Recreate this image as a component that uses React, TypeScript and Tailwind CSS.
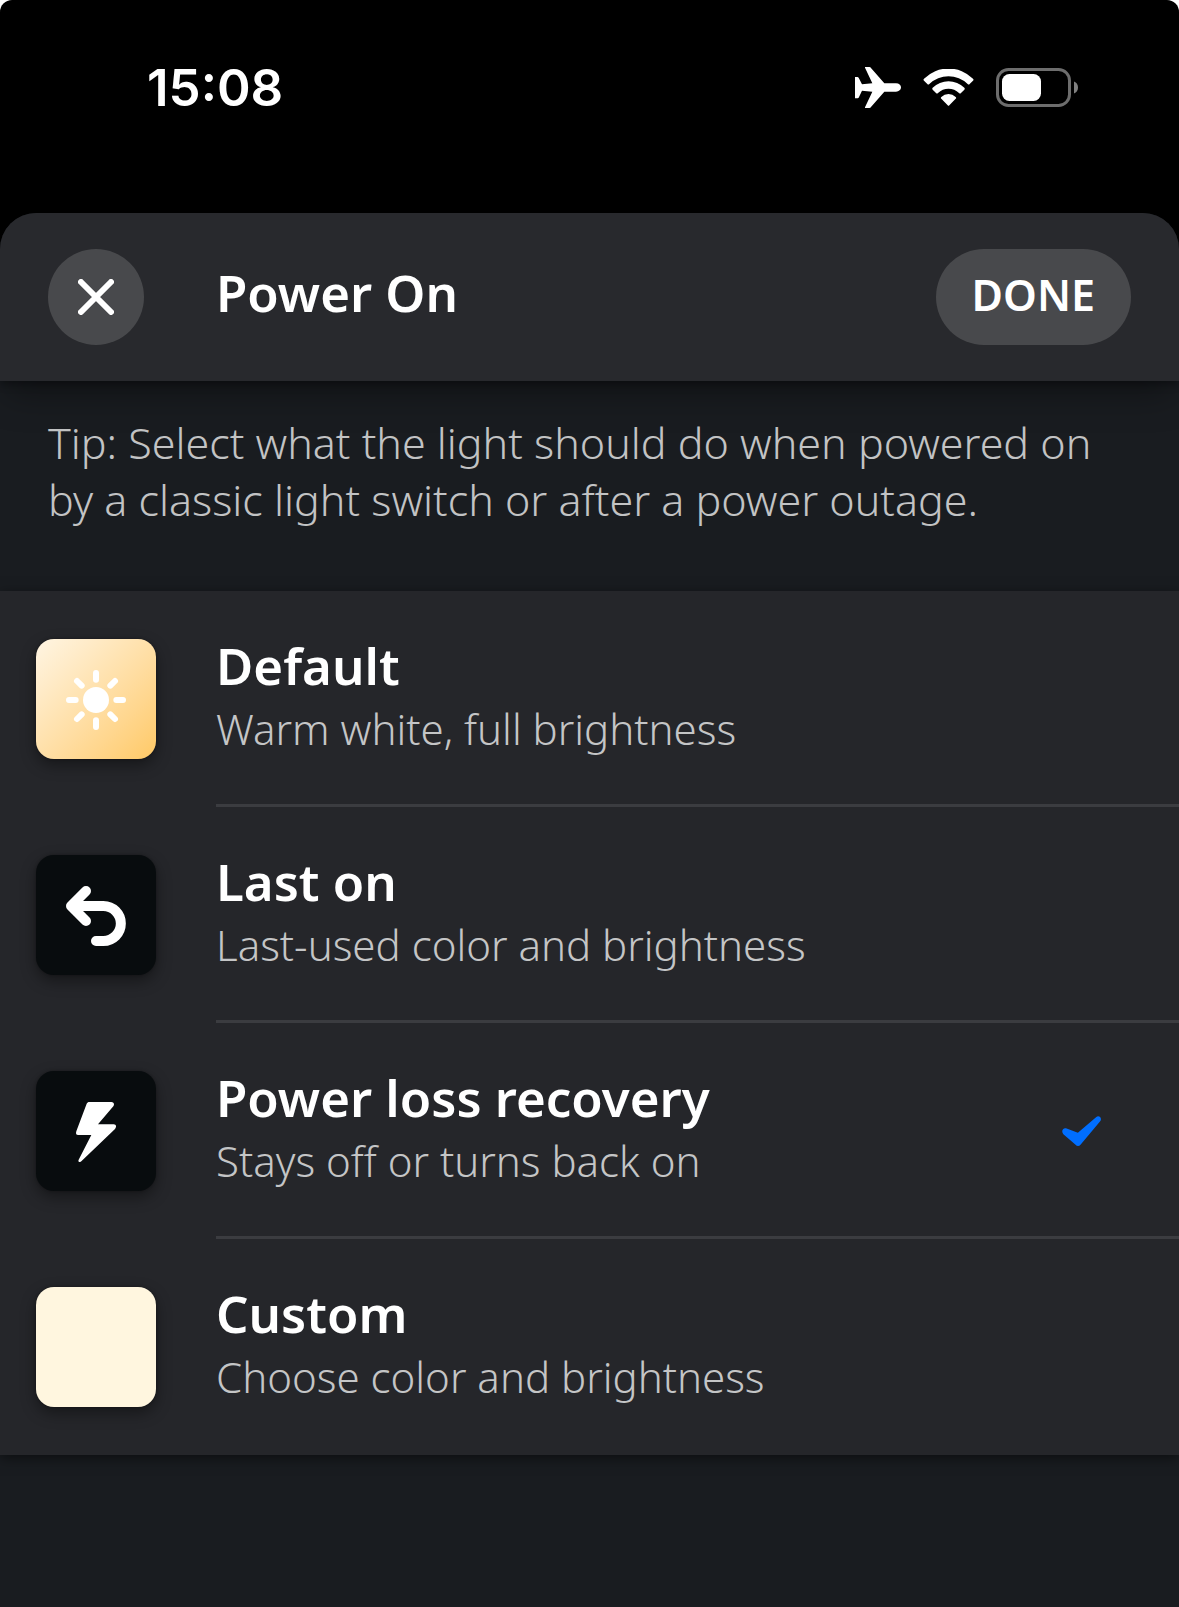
import React, { ReactNode, useState } from 'react';

interface PowerOption {
    id: string;
    title: string;
    description: string;
    tile: string;
    icon?: ReactNode;
}

const PlaneIcon = () => (
    <svg className="w-[46px] h-[41px]" viewBox="0 0 138 123" fill="currentColor" aria-hidden="true">
        <path d="M0 30h8l3 2 10 20 31-3-22-47v-2h13l3 1 42 48h35c9 0 15 5 15 12s-6 13-15 13H88l-42 48-3 1H30v-2l22-47-31-3-10 21-3 2H0z" />
    </svg>
);

const WifiIcon = () => (
    <svg className="w-[51px] h-[37px]" viewBox="0 0 151 111" fill="currentColor" aria-hidden="true">
        <path d="M2 29a104 104 0 0 1 147 0q3 3 0 6l-10 10q-3 3-6 0a83 83 0 0 0-115 0q-3 3-6 0L2 35q-3-3 0-6z" />
        <path d="M28 56a68 68 0 0 1 95 0q3 3 0 6l-10 10q-3 3-6 0a45 45 0 0 0-63 0q-3 3-6 0L28 62q-3-3 0-6z" />
        <path d="M54 84a31 31 0 0 1 43 0q3 3 0 5L78 109q-2 3-5 0L54 89q-3-2 0-5z" />
    </svg>
);

const BatteryIcon = () => (
    <svg className="w-[82px] h-[39px]" viewBox="0 0 82 39" aria-hidden="true">
        <rect x="1.5" y="1.5" width="72" height="36" rx="11" fill="none" stroke="#6d6d6d" strokeWidth="3" />
        <rect x="6" y="6" width="39" height="27" rx="7.5" fill="#fff" />
        <path d="M78 13.5c2.600.8 4 3.200 4 6s-1.400 5.200-4 6z" fill="#808080" />
    </svg>
);

const CloseIcon = () => (
    <svg className="w-9 h-9" viewBox="0 0 36 36" fill="none" stroke="currentColor" strokeWidth="6" strokeLinecap="round" aria-hidden="true">
        <path d="M3 3l30 30M33 3L3 33" />
    </svg>
);

const SunIcon = () => (
    <svg className="w-[60px] h-[60px]" viewBox="0 0 180 180" stroke="#fff" strokeWidth="18" strokeLinecap="round" aria-hidden="true">
        <circle cx="90" cy="90" r="39" fill="#fff" stroke="none" />
        <path d="M90 9v20M90 151v20M9 90h20M151 90h20M33 33l14 14M133 133l14 14M147 33l-14 14M47 133l-14 14" />
    </svg>
);

const UndoIcon = () => (
    <svg className="w-[60px] h-[60px]" viewBox="0 0 180 180" fill="none" stroke="#fff" strokeWidth="30" strokeLinecap="round" strokeLinejoin="round" aria-hidden="true">
        <path d="M60 15L15 60l45 45M15 60h97a52.500 52.500 0 0 1 0 105H90" />
    </svg>
);

const BoltIcon = () => (
    <svg className="w-10 h-[60px]" viewBox="0 0 120 180" fill="#fff" aria-hidden="true">
        <path d="M40 0h66c8 0 10 7 6 13L66 67h47c8 0 9 8 4 14L16 178c-4 4-11 2-8-5L46 99H6c-6 0-7-5-5-11L32 5c2-3 4-5 8-5z" />
    </svg>
);

const CheckIcon = () => (
    <svg className="w-[39px] h-[30px]" viewBox="0 0 118 91" fill="#006eff" aria-hidden="true">
        <path d="M14 38l34 13 56-48c6-5 14 0 14 7 0 3-1 5-3 7L56 87c-4 5-11 5-15 0L4 55C-4 46 3 34 14 38z" />
    </svg>
);

const options: PowerOption[] = [
    {
        id: 'default',
        title: 'Default',
        description: 'Warm white, full brightness',
        tile: 'bg-linear-to-br from-[#fff5e3] to-[#ffc965]',
        icon: <SunIcon />,
    },
    {
        id: 'last-on',
        title: 'Last on',
        description: 'Last-used color and brightness',
        tile: 'bg-[#080c0e]',
        icon: <UndoIcon />,
    },
    {
        id: 'recovery',
        title: 'Power loss recovery',
        description: 'Stays off or turns back on',
        tile: 'bg-[#080c0e]',
        icon: <BoltIcon />,
    },
    {
        id: 'custom',
        title: 'Custom',
        description: 'Choose color and brightness',
        tile: 'bg-[#fff6df]',
    },
];

const StatusBar = () => (
    <div className="flex items-center justify-between pt-[57px] pb-[95px] pl-[147px] pr-[101px] text-white">
        <span className="font-['Inter',sans-serif] text-[51px] leading-[61px] font-semibold">15:08</span>
        <div className="flex items-center gap-[22px]">
            <PlaneIcon />
            <WifiIcon />
            <BatteryIcon />
        </div>
    </div>
);

interface OptionRowProps {
    option: PowerOption;
    checked: boolean;
    onSelect: () => void;
}

const OptionRow: React.FC<OptionRowProps> = ({ option, checked, onSelect }) => (
    <label className="group flex pl-9 cursor-pointer">
        <input type="radio" name="power-on" className="sr-only" checked={checked} onChange={onSelect} />
        <span
            className={`my-12 flex w-[120px] h-[120px] shrink-0 items-center justify-center rounded-[18px] pt-0.5 shadow-[0_6px_15px_rgba(0,0,0,0.4),0_0_3px_rgba(0,0,0,0.3)] ${option.tile}`}
        >
            {option.icon}
        </span>
        <span className="ml-[60px] flex grow items-center justify-between border-b-[3px] border-[#3b3c40] pt-[3px] pr-[78px] group-last:border-transparent">
            <span>
                <span className="block text-[51px] leading-[60px] font-semibold text-white">{option.title}</span>
                <span className="block text-[42px] leading-[68px] font-light text-[#c4c5c6]">{option.description}</span>
            </span>
            {checked && <CheckIcon />}
        </span>
    </label>
);

const App: React.FC = () => {
    const [selected, setSelected] = useState('recovery');

    return (
        <div className="min-h-screen flex flex-col rounded-t-[12px] bg-black font-['Noto_Sans',sans-serif]">
            <StatusBar />
            <main className="grow rounded-t-[36px] bg-[#191c20]">
                <header className="relative z-10 flex items-center rounded-t-[36px] bg-[#28292d] px-12 py-9 text-white shadow-[0_18px_36px_-6px_rgba(0,0,0,0.35),0_3px_9px_rgba(0,0,0,0.35)]">
                    <button aria-label="Close" className="flex w-24 h-24 items-center justify-center rounded-full bg-[#48494c]">
                        <CloseIcon />
                    </button>
                    <h1 className="ml-[72px] grow pb-2.5 text-[51px] leading-[60px] font-semibold">Power On</h1>
                    <button className="h-24 rounded-full bg-[#48494c] px-9 pb-1 text-[43px] font-semibold">DONE</button>
                </header>
                <p className="px-12 pt-[33px] pb-[63px] text-[43px] leading-[57px] font-light text-[#c2c3c4]">
                    Tip: Select what the light should do when powered on by a classic light switch or after a power outage.
                </p>
                <div role="radiogroup" aria-label="Power On" className="bg-[#25262a] shadow-[0_3px_12px_rgba(0,0,0,0.5)]">
                    {options.map((option) => (
                        <OptionRow
                            key={option.id}
                            option={option}
                            checked={option.id === selected}
                            onSelect={() => setSelected(option.id)}
                        />
                    ))}
                </div>
            </main>
        </div>
    );
};

export default App;
